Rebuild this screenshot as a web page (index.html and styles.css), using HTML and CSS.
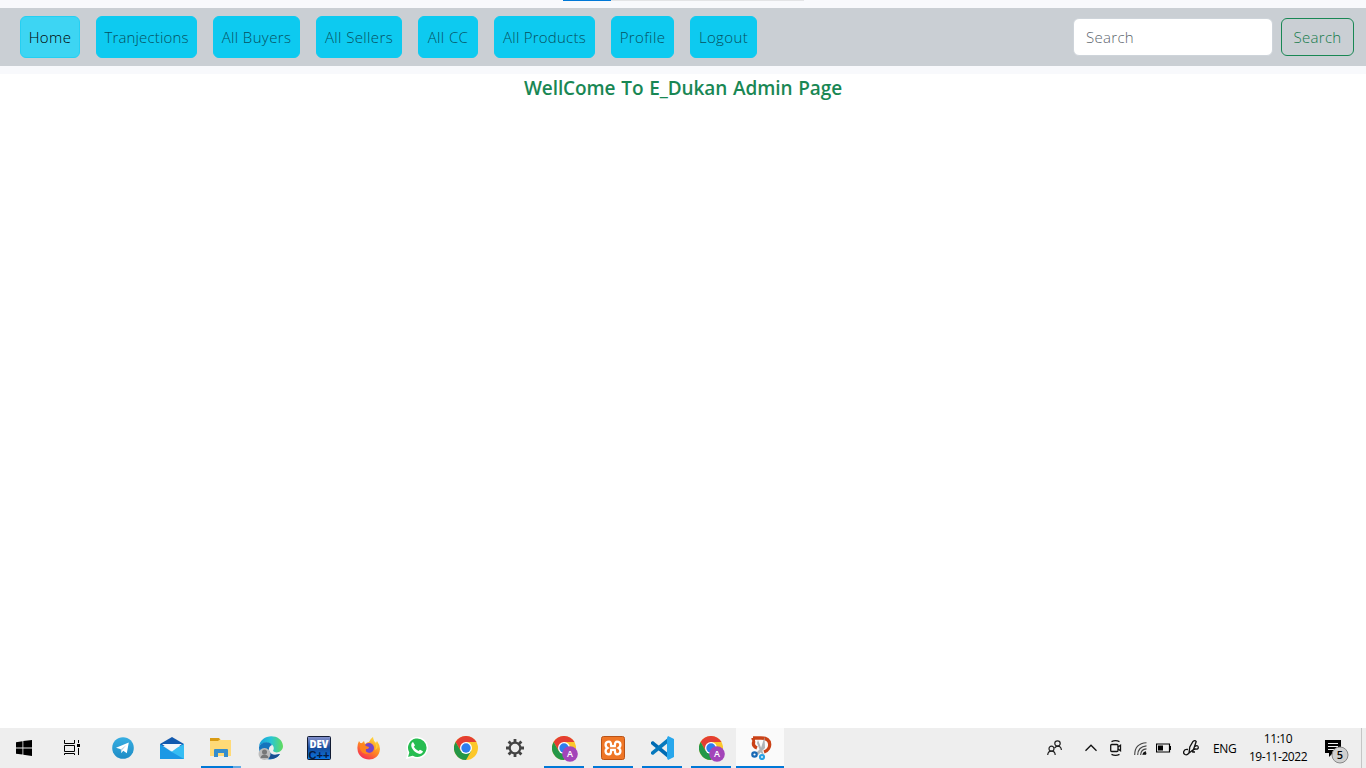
FILE: index.html
```html
<!DOCTYPE html>
<html lang="en">
<head>
<meta charset="utf-8">
<title>E_Dukan Admin</title>
<link rel="stylesheet" href="styles.css">
</head>
<body>
<svg class="defs" aria-hidden="true">
  <defs>
    <linearGradient id="sky" x1="0" y1="0" x2="0" y2="1"><stop offset="0" stop-color="#37aee2"/><stop offset="1" stop-color="#1e8cc5"/></linearGradient>
    <linearGradient id="edge" x1="0" y1="0" x2="1" y2="0"><stop offset="0" stop-color="#169edb"/><stop offset=".5" stop-color="#28c5d5"/><stop offset="1" stop-color="#62dc5b"/></linearGradient>
    <linearGradient id="dev" x1="0" y1="0" x2="0" y2="1"><stop offset="0" stop-color="#8792cd"/><stop offset=".5" stop-color="#174c9b"/><stop offset="1" stop-color="#0878e8"/></linearGradient>
    <linearGradient id="fox" x1=".8" y1="0" x2=".2" y2="1"><stop offset="0" stop-color="#ffe13e"/><stop offset=".5" stop-color="#ff8a22"/><stop offset="1" stop-color="#f5225b"/></linearGradient>
    <symbol id="chrome" viewBox="0 0 24 24">
      <circle cx="12" cy="12" r="12" fill="#fcc72a"/>
      <path d="M1.6 6A12 12 0 0 1 22.4 6H12L6.8 15Z" fill="#e43e32"/>
      <path d="M1.6 6A12 12 0 0 0 12 24L17.2 15H6.8Z" fill="#249747"/>
      <circle cx="12" cy="12" r="6" fill="#fff"/><circle cx="12" cy="12" r="4.7" fill="#2f7ded"/>
    </symbol>
  </defs>
</svg>
<div class="page">
  <div class="progress"><div class="progress-done"></div></div>
  <header class="header">
    <nav class="navbar">
      <a class="nav-link home active">Home</a>
      <a class="nav-link trans">Tranjections</a>
      <a class="nav-link buyers">All Buyers</a>
      <a class="nav-link sellers">All Sellers</a>
      <a class="nav-link cc">All CC</a>
      <a class="nav-link products">All Products</a>
      <a class="nav-link profile">Profile</a>
      <a class="nav-link logout">Logout</a>
      <form class="search">
        <input class="search-input" type="search" placeholder="Search">
        <button class="search-button" type="button">Search</button>
      </form>
    </nav>
  </header>
  <main class="content"><h1 class="title">WellCome To E_Dukan Admin Page</h1></main>
  <footer class="taskbar">
    <div class="start">
      <div class="task"><svg width="16" height="16" viewBox="0 0 16 16"><path d="M0 2.2L6.5 1.3V7.5H0ZM7.3 1.1L16 0V7.5H7.3ZM0 8.4H6.5V14.6L0 13.8ZM7.3 8.4H16V16L7.3 14.8Z"/></svg></div>
      <div class="task"><svg width="16" height="16" viewBox="0 0 16 16" fill="none" stroke="#000"><path d="M.5 0V3.5H10.5V0M.5 5.5H10.5V11.5H.5ZM.5 15V13.5H10.5V15M14.5 0V3M14.5 8V15"/><path d="M13 4h3v3h-3z" fill="#000" stroke="none"/></svg></div>
    </div>
    <div class="apps">
      <div class="task"><svg width="22" height="22" viewBox="0 0 22 22"><circle cx="11" cy="11" r="10.8" fill="url(#sky)"/><path d="M4 10.8L16.8 5.5L14.8 16.3L11.3 13.8L9.3 16L8.8 12.3Z" fill="#fff"/><path d="M8.8 12.3L14.5 8L10.2 12.9L9.3 16Z" fill="#b8d4e5"/></svg></div>
      <div class="task"><svg width="24" height="24" viewBox="0 0 24 24"><path d="M0 8L12 1L24 8V10H0Z" fill="#1259ae"/><path d="M0 8V23H24V8L12 16Z" fill="#1b98e5"/><path d="M24 8V23L10 15Z" fill="#36bdf3"/><path d="M2 8H22L12 15.5Z" fill="#f4f6fa"/></svg></div>
      <div class="task partial"><svg width="22" height="20" viewBox="0 0 22 20"><path d="M0 1Q0 0 1 0H9L11 2H21V18H0Z" fill="#fcd36b"/><path d="M0 0H9L10 2L8 3H0Z" fill="#d99b13"/><path d="M0 3H8L10 2H21V18H0Z" fill="#ffda77"/><path d="M4 19V12Q4 11 5 11H17Q18 11 18 12V19H14V15H8V19Z" fill="#358dcc"/></svg></div>
      <div class="task"><svg width="25" height="24" viewBox="0 0 25 24"><path d="M1 11C2-3 24-3 25 10C25 16 18 18 15 15C18 10 12 6 6 7Q2 8 1 11Z" fill="url(#edge)"/><path d="M1 11C3 5 12 5 14 9C9 11 10 18 17 19L22 18C16 27 1 25 1 11Z" fill="#1474bd"/><path d="M10 12C9 18 15 20 22 18C16 26 8 23 7 17Z" fill="#174e91"/><circle cx="6.5" cy="18" r="6" fill="#bcbcbc"/><circle cx="6.5" cy="16" r="2.5" fill="#777"/><path d="M2.5 22Q3 18.5 6.5 18.5T10.5 22Z" fill="#777"/></svg></div>
      <div class="task"><svg width="24" height="24" viewBox="0 0 24 24"><rect x=".5" y=".5" width="23" height="23" rx="1" fill="url(#dev)" stroke="#111b32"/><text class="dev-name" x="2.5" y="11.5" textLength="19" lengthAdjust="spacingAndGlyphs">DEV</text><text class="dev-plus" x="1.5" y="22.5" textLength="21" lengthAdjust="spacingAndGlyphs">C++</text></svg></div>
      <div class="task"><svg width="23" height="24" viewBox="0 0 23 24"><path d="M2 5L4 8L7 5L8 8Q10 6 12 6Q13 3 16 1Q16 5 19 7L20 5Q23 9 23 13C22 28 1 26 .5 13Q0 9 2 5Z" fill="url(#fox)"/><circle cx="12" cy="12" r="5" fill="#7545ca"/><path d="M3 7Q7 7 9 10L12 11Q12 13 9 13Q8 17 13 17Q6 20 3 13Z" fill="#ff841e"/><path d="M15 4Q21 8 18 14Q23 11 19 7Q16 5 16 1Z" fill="#ffcf37"/></svg></div>
      <div class="task"><svg width="22" height="22" viewBox="0 0 22 22"><path d="M1 21L2.5 15.5A10 10 0 1 1 6.5 19.5Z" fill="#27bd51" stroke="#fff" stroke-width="1.5"/><path d="M7 5L9 8.2L7.8 9.7Q9.5 12.8 12.5 14L14 12.7L17 14.3Q16.5 17 14 17C9 16 5 11.5 5.2 8Q5.5 5.5 7 5Z" fill="#fff"/></svg></div>
      <div class="task"><svg width="24" height="24"><use href="#chrome"/></svg></div>
      <div class="task"><svg width="18" height="18" viewBox="0 0 18 18" fill="none" stroke="#444"><circle cx="9" cy="9" r="5.3" stroke-width="2.2"/><path d="M9 0v4M9 14v4M0 9h4M14 9h4M2.6 2.6l3 3M12.4 12.4l3 3M15.4 2.6l-3 3M5.6 12.4l-3 3" stroke-width="2.8"/></svg></div>
      <div class="task running profile-app"><svg width="26" height="26" viewBox="0 0 26 26"><use href="#chrome" width="24" height="24"/><circle cx="18" cy="18" r="7.8" fill="#a345b9"/><text class="avatar" x="18" y="21">A</text></svg></div>
      <div class="task running"><svg width="24" height="24" viewBox="0 0 24 24"><rect x=".5" y=".5" width="23" height="23" rx="2" fill="#ef7626" stroke="#b95216"/><path d="M8 5.7C3.5 5.7 4 10.5 6.5 12C4 13.5 3.5 18.3 8 18.3C10.3 18.3 10 16.2 10.2 13.8H13.8C14 16.2 13.7 18.3 16 18.3C20.5 18.3 20 13.5 17.5 12C20 10.5 20.5 5.7 16 5.7C13.7 5.7 14 7.8 13.8 10.2H10.2C10 7.8 10.3 5.7 8 5.7Z" fill="none" stroke="#fff" stroke-width="2.3"/></svg></div>
      <div class="task running"><svg width="24" height="24" viewBox="0 0 24 24"><path d="M1 6L3 5L19 18V23L1 8Z" fill="#006bb3"/><path d="M1 18L3 19L19 6V1L1 16Z" fill="#0779bd"/><path d="M18 0L24 3V21L18 24L17 22V2Z" fill="#28a7ec"/></svg></div>
      <div class="task running profile-app"><svg width="26" height="26" viewBox="0 0 26 26"><use href="#chrome" width="24" height="24"/><circle cx="18" cy="18" r="7.8" fill="#a345b9"/><text class="avatar" x="18" y="21">A</text></svg></div>
      <div class="task running selected"><svg width="22" height="24" viewBox="0 0 22 24"><path d="M3 2H11C22 2 22 13 14 16M3 2Q3 4 5 4M4 5Q2 10 7 12" fill="none" stroke="#ca4217" stroke-width="3.3"/><path d="M8 4L14 19L11 17L7 7ZM14.5 1L15 12L8 19L6 17L11 12Z" fill="#aeb4b8"/><g fill="none" stroke="#1769b5" stroke-width="2.2"><circle cx="4.5" cy="18.5" r="2.2"/><circle cx="12" cy="21" r="2" stroke="#28a0e3"/></g></svg></div>
    </div>
    <div class="tray">
      <svg width="16" height="16" viewBox="0 0 16 16" fill="none" stroke="#222" stroke-width="1.2"><circle cx="10.5" cy="3.5" r="2.7"/><circle cx="4.5" cy="8.7" r="2.5"/><path d="M.7 15Q1 11.2 4.5 11.2T8.2 15M7.5 8Q9 6.2 10.8 6.2Q14 6.3 14.4 10"/></svg>
      <svg class="chevron" width="12" height="8" viewBox="0 0 12 8" fill="none" stroke="#111" stroke-width="1.3"><path d="M.5 6.8L6 1.2L11.5 6.8"/></svg>
      <svg class="camera" width="12" height="16" viewBox="0 0 12 16" fill="none" stroke="#111" stroke-width="1.3"><rect x=".7" y="4.5" width="7.3" height="7" rx="1"/><path d="M8 7L10.5 5.2V10.8L8 9M1.5 1.6Q5.5-.2 9.5 1.6M1.5 14.4Q5.5 16.2 9.5 14.4"/></svg>
      <svg class="wifi" width="13" height="13" viewBox="0 0 13 13" fill="none" stroke="#444" stroke-width="1.1"><path d="M.7 13Q.7 1.5 12.5 .8M3.7 13Q4 4.6 12.5 3.9M6.6 13Q7 7.3 12.5 6.9"/><path d="M9 13Q9.2 10.2 12 9.7" stroke="#111"/><circle cx="11" cy="11.5" r="1.4" fill="#111" stroke="none"/></svg>
      <svg class="battery" width="15" height="10" viewBox="0 0 15 10"><path d="M.5 1H13.5V9H.5ZM14.5 3V7" fill="none" stroke="#000" stroke-width="1.2"/><path d="M2 2.5H7V7.5H2Z"/></svg>
      <svg class="pen" width="16" height="16" viewBox="0 0 16 16" fill="none" stroke="#111" stroke-width="1.3"><path d="M6 13L6.8 7L10 1.5Q12-.2 13.2 1.5L10.5 9.5L6 13M5 9.5C.5 8.8-.5 13.2 2 14.5Q4 15.5 6 13M12 6.5Q15 4.5 15.3 7.5Q15.3 9.5 12.5 9Q9.5 9 9.8 12L12 12"/></svg>
      <span class="language">ENG</span>
      <div class="clock"><span class="time">11:10</span><span class="date">19-11-2022</span></div>
      <svg class="notice" width="26" height="28" viewBox="0 0 26 28"><path d="M1 1H17V14H9L5 18V14H1Z"/><path d="M4 4.5H14M4 7.5H14M4 10.5H14" stroke="#eee"/><circle cx="16" cy="16" r="8" fill="#d0d0d0" stroke="#888"/><text class="notice-count" x="16" y="20">5</text></svg>
    </div>
  </footer>
</div>
</body>
</html>
```
FILE: styles.css
```css
* { box-sizing: border-box; }
body { margin: 0; font-family: "Open Sans", "Noto Sans", sans-serif; background: #fff; }
.defs { position: absolute; width: 0; height: 0; }
.page { display: flex; flex-direction: column; height: 768px; width: 1366px; position: relative; }
.progress { position: absolute; left: 563px; top: 0; width: 241px; height: 1px; background: #e3e4e6; }
.progress-done { width: 48px; height: 1px; background: #0078d7; }
.header { background: #f8f9fc; padding: 8px 0; height: 74px; flex: none; }
.navbar { display: flex; align-items: center; gap: 16px; height: 58px; padding: 0 12px 0 20px; background: #cacfd4; }
.nav-link { height: 42px; border: 1px solid #0dcaf0; border-radius: 6px; background: #0dcaf0; color: #06505f; font-size: 15px; font-weight: 300; line-height: 40px; letter-spacing: .38px; text-align: center; white-space: nowrap; flex: none; }
.active { background: #3dd5f3; border-color: #25cff2; color: #000; }
.home { width: 60px; }
.trans { width: 101px; letter-spacing: .15px; }
.buyers { width: 87px; }
.sellers { width: 86px; }
.cc { width: 60px; }
.products { width: 101px; letter-spacing: .25px; }
.profile { width: 63px; }
.logout { width: 67px; }
.search { display: flex; align-items: center; gap: 8px; margin-left: auto; }
.search-input { width: 200px; height: 38px; border: 1px solid #ced4da; border-radius: 6px; padding: 0 12px; background: #fff; font: 300 15px "Open Sans", sans-serif; letter-spacing: .3px; }
.search-input::placeholder { color: #5c656d; opacity: 1; }
.search-button { width: 73px; height: 38px; padding: 0; border: 1px solid #198754; border-radius: 6px; background: transparent; color: #137a4a; font: 300 15px "Open Sans", sans-serif; letter-spacing: .3px; }
.content { flex: 1; }
.title { margin: 0; padding-top: 2px; color: #198754; font-size: 19px; line-height: 24px; font-weight: 600; letter-spacing: -.1px; word-spacing: 1px; text-align: center; }
.taskbar { display: flex; height: 40px; background: #eeeeee; }
.start, .apps { display: flex; }
.apps { gap: 1px; margin-left: 3px; }
.task { display: flex; align-items: center; justify-content: center; width: 48px; height: 40px; }
.running { background: linear-gradient(#0078d7, #0078d7) center bottom / 40px 2px no-repeat; }
.partial { background: linear-gradient(90deg, #0078d7 32px, #63aae5 32px) center bottom / 40px 2px no-repeat; }
.profile-app { padding: 2px 0 0 2px; }
.selected { background-color: #fafafa; background-size: 48px 2px; padding-left: 2px; }
.dev-name { font: 800 10px "Open Sans", sans-serif; fill: #fff; }
.dev-plus { font: 700 11px "Liberation Sans", sans-serif; fill: #061b42; }
.avatar { font: 600 9px "Open Sans", sans-serif; fill: #fff; text-anchor: middle; }
.tray { display: flex; align-items: center; margin-left: auto; width: 319px; background: linear-gradient(#c5c5c5, #c5c5c5) 314px 0 / 1px 40px no-repeat; }
.chevron { margin-left: 22px; }
.camera { margin-left: 13px; }
.wifi { margin-left: 12px; }
.battery { margin-left: 9px; }
.pen { margin-left: 12px; }
.language { width: 24px; margin-left: 14px; font-size: 12px; letter-spacing: -.4px; }
.clock { display: flex; flex-direction: column; width: 60px; margin-left: 11px; text-align: center; font-size: 12px; line-height: 18px; letter-spacing: -.45px; }
.notice { margin-left: 16px; margin-top: 10px; }
.notice-count { font: 600 11px "Open Sans", sans-serif; text-anchor: middle; }
```
